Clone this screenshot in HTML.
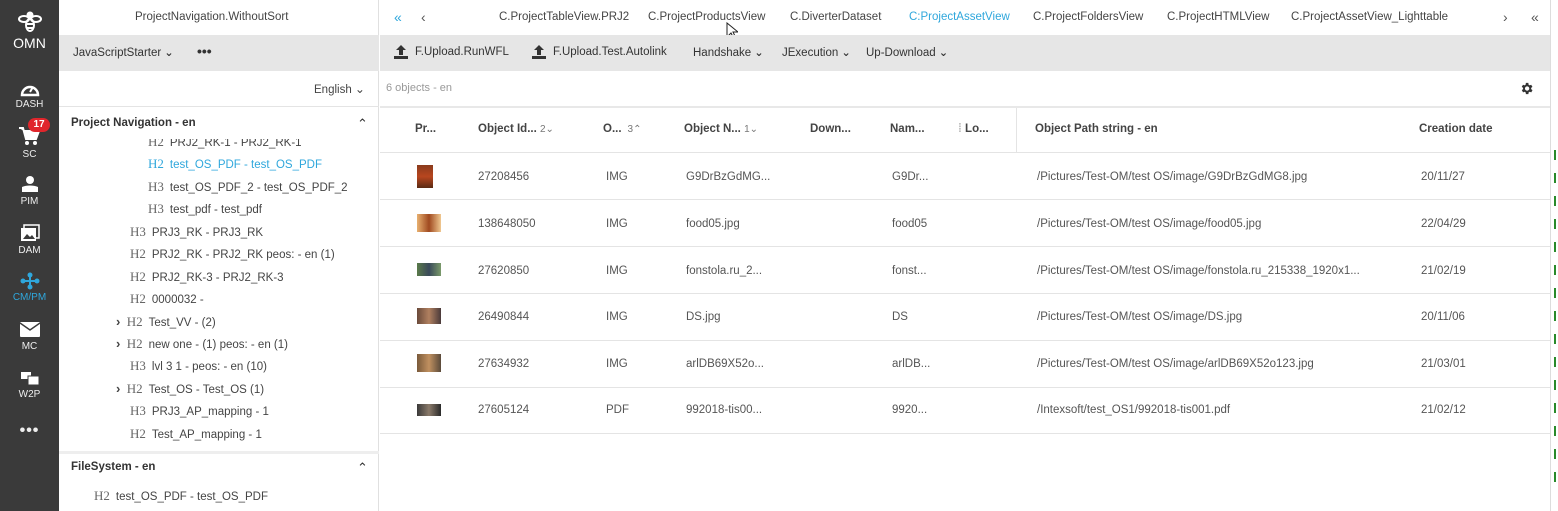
<!DOCTYPE html>
<html><head><meta charset="utf-8">
<style>
*{margin:0;padding:0;box-sizing:border-box}
body{width:1558px;height:511px;overflow:hidden;background:#fff;font-family:"Liberation Sans","DejaVu Sans",sans-serif;color:#444;position:relative;font-size:12px}
.a{position:absolute;white-space:nowrap}
#side{left:0;top:0;width:59px;height:511px;background:#3a3a3a;color:#fff}
.si{position:absolute;left:0;width:59px;text-align:center;font-size:10px;color:#eee}
.t{font-size:11.5px;color:#444}
.h{font-family:"Liberation Serif","DejaVu Serif",serif;font-size:13px;color:#666;margin-right:6px}
.b{font-weight:bold;color:#333;font-size:11.5px}
.hdr{font-weight:bold;color:#444;font-size:11.5px}
.cell{font-size:11.5px;color:#555}
.line{position:absolute;height:1px;background:#e4e4e4}
.chev{font-size:13px;font-weight:bold;color:#333}
</style></head><body>
<div id="side" class="a">
  <svg class="a" style="left:18px;top:10px" width="24" height="24" viewBox="0 0 24 24" fill="none" stroke="#fff" stroke-width="2"><ellipse cx="6" cy="9" rx="5" ry="3"/><ellipse cx="18" cy="9" rx="5" ry="3"/><circle cx="12" cy="5" r="2.5" fill="#fff"/><ellipse cx="12" cy="15" rx="4" ry="6"/><path d="M8 14h8M8.5 18h7"/></svg>
  <div class="si" style="top:35px;font-size:14px;color:#fff">OMN</div>
  <svg class="a" style="left:20px;top:80px" width="20" height="18" viewBox="0 0 20 18"><path d="M2 15A8 8 0 1 1 18 15Z" fill="none" stroke="#fff" stroke-width="2.5"/><path d="M10 12l3-5" stroke="#fff" stroke-width="2"/></svg>
  <div class="si" style="top:99px">DASH</div>
  <svg class="a" style="left:18px;top:126px" width="22" height="20" viewBox="0 0 22 20"><path d="M1 2h4l3 11h10l3-8H6" fill="#fff" stroke="#fff" stroke-width="2"/><circle cx="9" cy="17" r="2" fill="#fff"/><circle cx="17" cy="17" r="2" fill="#fff"/></svg>
  <div class="a" style="left:28px;top:118px;background:#e0262c;border-radius:8px;width:22px;height:14px;font-size:10px;font-weight:bold;text-align:center;line-height:14px">17</div>
  <div class="si" style="top:149px">SC</div>
  <svg class="a" style="left:21px;top:175px" width="18" height="18" viewBox="0 0 18 18"><circle cx="9" cy="5" r="4" fill="#fff"/><path d="M1 12c4-2 12-2 16 0v5H1z" fill="#fff"/></svg>
  <div class="si" style="top:196px">PIM</div>
  <svg class="a" style="left:20px;top:224px" width="20" height="18" viewBox="0 0 20 18"><rect x="1" y="4" width="15" height="13" fill="#fff"/><rect x="4" y="1" width="15" height="13" fill="none" stroke="#fff" stroke-width="1.5"/><path d="M3 15l4-5 3 3 2-2 3 4z" fill="#3a3a3a"/></svg>
  <div class="si" style="top:245px">DAM</div>
  <svg class="a" style="left:20px;top:272px" width="20" height="18" viewBox="0 0 20 18" fill="#2fa7dc"><circle cx="10" cy="3" r="2.5"/><circle cx="3" cy="9" r="2.5"/><circle cx="17" cy="9" r="2.5"/><circle cx="10" cy="15" r="2.5"/><path d="M3 9h14M10 3v12" stroke="#2fa7dc" stroke-width="2"/></svg>
  <div class="si" style="top:292px;color:#2fa7dc">CM/PM</div>
  <svg class="a" style="left:20px;top:322px" width="20" height="15" viewBox="0 0 20 15"><rect width="20" height="15" rx="1" fill="#fff"/><path d="M0 1l10 7 10-7" fill="none" stroke="#3a3a3a" stroke-width="1.5"/></svg>
  <div class="si" style="top:341px">MC</div>
  <svg class="a" style="left:20px;top:370px" width="20" height="16" viewBox="0 0 20 16"><rect x="1" y="2" width="10" height="7" fill="#fff"/><rect x="8" y="6" width="11" height="9" fill="#fff" stroke="#3a3a3a"/></svg>
  <div class="si" style="top:389px">W2P</div>
  <div class="si" style="top:422px;font-size:16px;font-weight:bold;letter-spacing:1px">•••</div>
</div>

<div class="a" style="left:59px;top:0;width:320px;height:511px;border-right:1px solid #e0e0e0">
  <div class="a t" style="left:76px;top:11px">ProjectNavigation.WithoutSort</div>
  <div class="a" style="left:0;top:35px;width:320px;height:36px;background:#e6e6e6"></div>
  <div class="a t" style="left:14px;top:46px;color:#333">JavaScriptStarter <span class="chev" style="font-size:11px">&#8964;</span></div>
  <div class="a" style="left:138px;top:43px;font-size:14px;font-weight:bold;color:#333">•••</div>
  <div class="a t" style="left:255px;top:82px">English <span style="font-size:12px">&#8964;</span></div>
  <div class="line" style="left:0;top:106px;width:320px"></div>
  <div class="a b" style="left:12px;top:117px">Project Navigation - en</div>
  <div class="a" style="left:298px;top:116px;font-size:13px;color:#333">&#8963;</div>
</div>
<div class="a t" style="left:148px;top:134px;clip-path:inset(5px 0 0 0)"><span class="h">H2</span>PRJ2_RK-1 - PRJ2_RK-1</div>
<div class="a t" style="left:148px;top:156px;color:#2fa7dc"><span class="h" style="color:#2fa7dc">H2</span>test_OS_PDF - test_OS_PDF</div>
<div class="a t" style="left:148px;top:179px"><span class="h">H3</span>test_OS_PDF_2 - test_OS_PDF_2</div>
<div class="a t" style="left:148px;top:201px"><span class="h">H3</span>test_pdf - test_pdf</div>
<div class="a t" style="left:130px;top:224px"><span class="h">H3</span>PRJ3_RK - PRJ3_RK</div>
<div class="a t" style="left:130px;top:246px"><span class="h">H2</span>PRJ2_RK - PRJ2_RK peos: - en (1)</div>
<div class="a t" style="left:130px;top:269px"><span class="h">H2</span>PRJ2_RK-3 - PRJ2_RK-3</div>
<div class="a t" style="left:130px;top:291px"><span class="h">H2</span>0000032 -</div>
<div class="a t" style="left:116px;top:314px"><b style="font-size:13px">›</b>&nbsp; <span class="h">H2</span>Test_VV - (2)</div>
<div class="a t" style="left:116px;top:336px"><b style="font-size:13px">›</b>&nbsp; <span class="h">H2</span>new one - (1) peos: - en (1)</div>
<div class="a t" style="left:130px;top:358px"><span class="h">H3</span>lvl 3 1 - peos: - en (10)</div>
<div class="a t" style="left:116px;top:381px"><b style="font-size:13px">›</b>&nbsp; <span class="h">H2</span>Test_OS - Test_OS (1)</div>
<div class="a t" style="left:130px;top:403px"><span class="h">H3</span>PRJ3_AP_mapping - 1</div>
<div class="a t" style="left:130px;top:426px"><span class="h">H2</span>Test_AP_mapping - 1</div>
<div class="a" style="left:59px;top:451px;width:320px;height:3px;background:#eee"></div>
<div class="a b" style="left:71px;top:461px">FileSystem - en</div>
<div class="a" style="left:357px;top:460px;font-size:13px;color:#333">&#8963;</div>
<div class="a t" style="left:94px;top:488px"><span class="h">H2</span>test_OS_PDF - test_OS_PDF</div>

<div class="a" style="left:394px;top:9px;color:#2fa7dc;font-size:14px">«</div>
<div class="a" style="left:421px;top:9px;color:#555;font-size:14px">‹</div>
<div class="a t" style="left:499px;top:11px">C.ProjectTableView.PRJ2</div>
<div class="a t" style="left:648px;top:11px">C.ProjectProductsView</div>
<div class="a t" style="left:790px;top:11px">C.DiverterDataset</div>
<div class="a t" style="left:909px;top:11px;color:#2fa7dc">C:ProjectAssetView</div>
<div class="a t" style="left:1033px;top:11px">C.ProjectFoldersView</div>
<div class="a t" style="left:1167px;top:11px">C.ProjectHTMLView</div>
<div class="a t" style="left:1291px;top:11px">C.ProjectAssetView_Lighttable</div>
<div class="a" style="left:1503px;top:9px;color:#555;font-size:14px">›</div>
<div class="a" style="left:1531px;top:9px;color:#555;font-size:14px">«</div>
<svg class="a" style="left:726px;top:22px" width="12" height="18" viewBox="0 0 12 18"><path d="M1 1v14l4-4 3 6 2-1-3-6h5z" fill="#fff" stroke="#222"/></svg>

<div class="a" style="left:380px;top:35px;width:1170px;height:36px;background:#e6e6e6"></div>
<svg class="a" style="left:393px;top:44px" width="16" height="16" viewBox="0 0 16 16" fill="#333"><path d="M8 1l5 5H10v5H6V6H3z"/><rect x="1" y="12" width="14" height="3"/></svg>
<div class="a t" style="left:415px;top:46px;color:#333">F.Upload.RunWFL</div>
<svg class="a" style="left:531px;top:44px" width="16" height="16" viewBox="0 0 16 16" fill="#333"><path d="M8 1l5 5H10v5H6V6H3z"/><rect x="1" y="12" width="14" height="3"/></svg>
<div class="a t" style="left:553px;top:46px;color:#333">F.Upload.Test.Autolink</div>
<div class="a t" style="left:693px;top:46px;color:#333">Handshake <span class="chev" style="font-size:11px">&#8964;</span></div>
<div class="a t" style="left:782px;top:46px;color:#333">JExecution <span class="chev" style="font-size:11px">&#8964;</span></div>
<div class="a t" style="left:866px;top:46px;color:#333">Up-Download <span class="chev" style="font-size:11px">&#8964;</span></div>

<div class="a" style="left:386px;top:82px;font-size:11px;color:#999">6 objects - en</div>
<svg class="a" style="left:1519px;top:81px" width="15" height="15" viewBox="0 0 24 24" fill="#333"><path d="M19.4 13a7.5 7.5 0 0 0 0-2l2.1-1.6-2-3.5-2.5 1a7 7 0 0 0-1.7-1L15 3h-4l-.4 2.9a7 7 0 0 0-1.7 1l-2.5-1-2 3.5L6.6 11a7.5 7.5 0 0 0 0 2l-2.1 1.6 2 3.5 2.5-1a7 7 0 0 0 1.7 1L11 21h4l.4-2.9a7 7 0 0 0 1.7-1l2.5 1 2-3.5zM13 15.5a3.5 3.5 0 1 1 0-7 3.5 3.5 0 0 1 0 7z"/></svg>
<div class="line" style="left:380px;top:106px;width:1170px;height:2px;background:#e8e8e8"></div>
<div class="a" style="left:1016px;top:108px;width:1px;height:44px;background:#e4e4e4"></div>

<div class="a hdr" style="left:415px;top:123px">Pr...</div>
<div class="a hdr" style="left:478px;top:123px">Object Id... <span style="font-weight:normal;font-size:10px;color:#777">2&#8964;</span></div>
<div class="a hdr" style="left:603px;top:123px">O... <span style="font-weight:normal;font-size:10px;color:#777">&nbsp;3&#8963;</span></div>
<div class="a hdr" style="left:684px;top:123px">Object N... <span style="font-weight:normal;font-size:10px;color:#777">1&#8964;</span></div>
<div class="a hdr" style="left:810px;top:123px">Down...</div>
<div class="a hdr" style="left:890px;top:123px">Nam...</div>
<div class="a hdr" style="left:958px;top:123px"><span style="color:#bbb">⁞</span> Lo...</div>
<div class="a hdr" style="left:1035px;top:123px">Object Path string - en</div>
<div class="a hdr" style="left:1419px;top:123px">Creation date</div>
<div class="line" style="left:380px;top:152px;width:1170px"></div>

<div class="a" style="left:417px;top:165px;width:16px;height:23px;background:linear-gradient(#8a3a1c,#b8461f 50%,#5a2a14)"></div>
<div class="a cell" style="left:478px;top:171px">27208456</div><div class="a cell" style="left:606px;top:171px">IMG</div><div class="a cell" style="left:686px;top:171px">G9DrBzGdMG...</div><div class="a cell" style="left:892px;top:171px">G9Dr...</div><div class="a cell" style="left:1037px;top:171px">/Pictures/Test-OM/test OS/image/G9DrBzGdMG8.jpg</div><div class="a cell" style="left:1421px;top:171px">20/11/27</div>
<div class="line" style="left:380px;top:199px;width:1170px"></div>

<div class="a" style="left:417px;top:214px;width:24px;height:18px;background:linear-gradient(90deg,#e8b070,#a04a20,#f0c890)"></div>
<div class="a cell" style="left:478px;top:218px">138648050</div><div class="a cell" style="left:606px;top:218px">IMG</div><div class="a cell" style="left:686px;top:218px">food05.jpg</div><div class="a cell" style="left:892px;top:218px">food05</div><div class="a cell" style="left:1037px;top:218px">/Pictures/Test-OM/test OS/image/food05.jpg</div><div class="a cell" style="left:1421px;top:218px">22/04/29</div>
<div class="line" style="left:380px;top:246px;width:1170px"></div>

<div class="a" style="left:417px;top:263px;width:24px;height:13px;background:linear-gradient(90deg,#5a7a4a,#3a4a5a,#7a9a6a)"></div>
<div class="a cell" style="left:478px;top:265px">27620850</div><div class="a cell" style="left:606px;top:265px">IMG</div><div class="a cell" style="left:686px;top:265px">fonstola.ru_2...</div><div class="a cell" style="left:892px;top:265px">fonst...</div><div class="a cell" style="left:1037px;top:265px">/Pictures/Test-OM/test OS/image/fonstola.ru_215338_1920x1...</div><div class="a cell" style="left:1421px;top:265px">21/02/19</div>
<div class="line" style="left:380px;top:293px;width:1170px"></div>

<div class="a" style="left:417px;top:308px;width:24px;height:16px;background:linear-gradient(90deg,#6a4a3a,#b08060,#4a3a3a)"></div>
<div class="a cell" style="left:478px;top:311px">26490844</div><div class="a cell" style="left:606px;top:311px">IMG</div><div class="a cell" style="left:686px;top:311px">DS.jpg</div><div class="a cell" style="left:892px;top:311px">DS</div><div class="a cell" style="left:1037px;top:311px">/Pictures/Test-OM/test OS/image/DS.jpg</div><div class="a cell" style="left:1421px;top:311px">20/11/06</div>
<div class="line" style="left:380px;top:340px;width:1170px"></div>

<div class="a" style="left:417px;top:354px;width:24px;height:18px;background:linear-gradient(90deg,#7a5a3a,#c09060,#5a4a3a)"></div>
<div class="a cell" style="left:478px;top:358px">27634932</div><div class="a cell" style="left:606px;top:358px">IMG</div><div class="a cell" style="left:686px;top:358px">arlDB69X52o...</div><div class="a cell" style="left:892px;top:358px">arlDB...</div><div class="a cell" style="left:1037px;top:358px">/Pictures/Test-OM/test OS/image/arlDB69X52o123.jpg</div><div class="a cell" style="left:1421px;top:358px">21/03/01</div>
<div class="line" style="left:380px;top:387px;width:1170px"></div>

<div class="a" style="left:417px;top:404px;width:24px;height:12px;background:linear-gradient(90deg,#3a3a3a,#8a7a6a,#2a2a2a)"></div>
<div class="a cell" style="left:478px;top:404px">27605124</div><div class="a cell" style="left:606px;top:404px">PDF</div><div class="a cell" style="left:686px;top:404px">992018-tis00...</div><div class="a cell" style="left:892px;top:404px">9920...</div><div class="a cell" style="left:1037px;top:404px">/Intexsoft/test_OS1/992018-tis001.pdf</div><div class="a cell" style="left:1421px;top:404px">21/02/12</div>
<div class="line" style="left:380px;top:433px;width:1170px"></div>

<div class="a" style="left:1550px;top:0;width:8px;height:511px;background:#fff;border-left:1px solid #ddd"></div>
<div class="a" style="left:1554px;top:150px;width:2px;height:340px;background:repeating-linear-gradient(#2a8a2a 0 10px,transparent 10px 23px)"></div>
</body></html>
